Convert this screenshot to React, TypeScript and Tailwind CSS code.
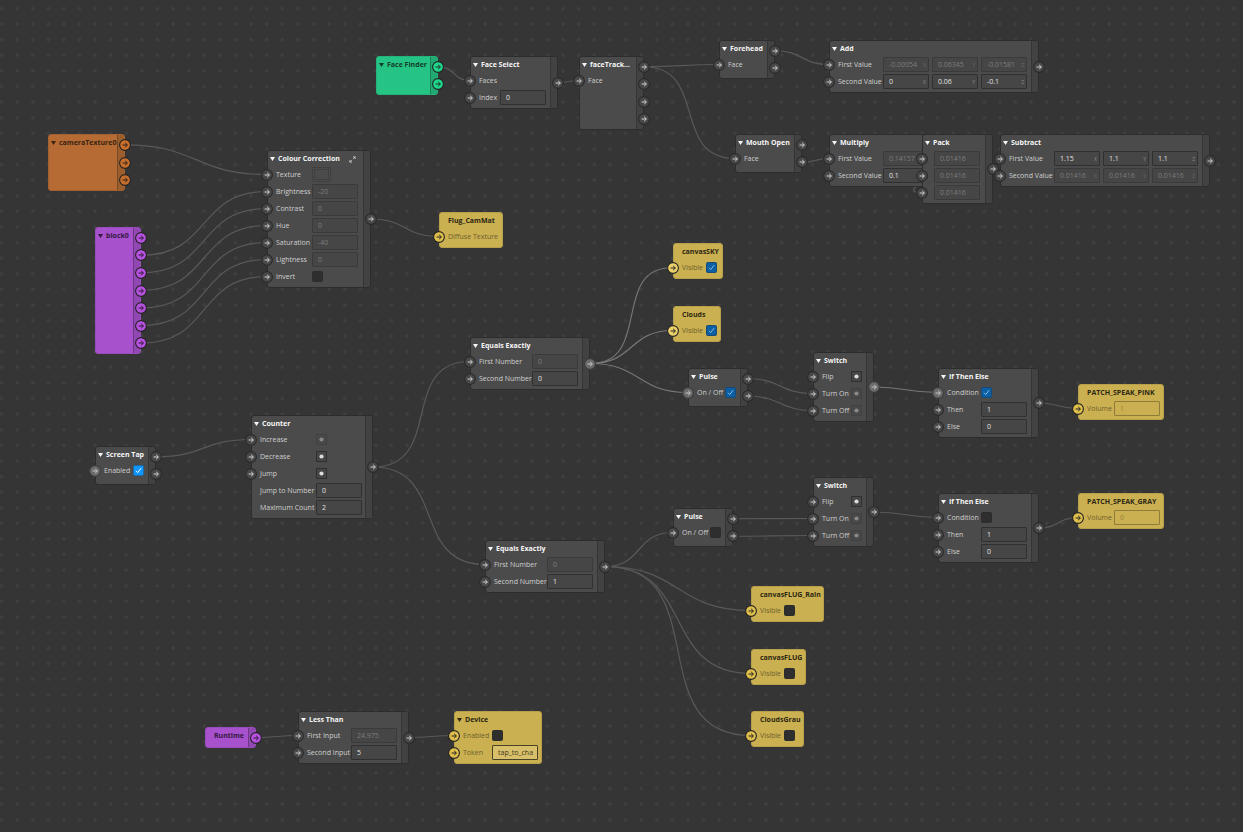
import { useId } from 'react';

type Tone = 'gray' | 'green' | 'orange' | 'purple' | 'yellow';

type Control =
  | { kind: 'none' }
  | { kind: 'text'; value: string; linked?: boolean }
  | { kind: 'vector'; values: string[]; linked?: boolean }
  | { kind: 'check'; on: boolean; bright?: boolean }
  | { kind: 'pulse'; linked?: boolean }
  | { kind: 'swatch' };

interface Row {
  label: string;
  control: Control;
  noPort?: boolean;
  active?: boolean;
}

interface PatchNode {
  id: string;
  title: string;
  tone?: Tone;
  x: number;
  y: number;
  w: number;
  h?: number;
  labelW?: number;
  flat?: boolean;
  expand?: boolean;
  rows?: Row[];
  outs?: number;
  activeOut?: boolean;
}

const HEADER = 16;
const ROW = 17;

const none: Control = { kind: 'none' };
const text = (value: string, linked = false): Control => ({ kind: 'text', value, linked });
const vector = (values: string[], linked = false): Control => ({ kind: 'vector', values, linked });
const check = (on: boolean, bright = false): Control => ({ kind: 'check', on, bright });
const pulse = (linked = false): Control => ({ kind: 'pulse', linked });

const NODES: PatchNode[] = [
  { id: 'finder', title: 'Face Finder', tone: 'green', x: 376, y: 56, w: 62, h: 39, outs: 2 },
  {
    id: 'select', title: 'Face Select', x: 470, y: 56, w: 88, labelW: 21, outs: 1,
    rows: [{ label: 'Faces', control: none }, { label: 'Index', control: text('0') }],
  },
  { id: 'tracker', title: 'faceTrack...', x: 579, y: 56, w: 65, h: 74, outs: 4, rows: [{ label: 'Face', control: none }] },
  { id: 'forehead', title: 'Forehead', x: 719, y: 40, w: 56, h: 39, outs: 2, rows: [{ label: 'Face', control: none }] },
  {
    id: 'add', title: 'Add', x: 829, y: 40, w: 210, labelW: 45, outs: 1,
    rows: [
      { label: 'First Value', control: vector(['-0.00054', '0.06345', '-0.01581'], true) },
      { label: 'Second Value', control: vector(['0', '0.06', '-0.1']) },
    ],
  },
  { id: 'mouth', title: 'Mouth Open', x: 735, y: 134, w: 67, h: 39, outs: 2, rows: [{ label: 'Face', control: none }] },
  {
    id: 'multiply', title: 'Multiply', x: 829, y: 134, w: 113, labelW: 45, outs: 1,
    rows: [
      { label: 'First Value', control: text('0.14157', true) },
      { label: 'Second Value', control: text('0.1') },
    ],
  },
  {
    id: 'pack', title: 'Pack', x: 922, y: 134, w: 71, labelW: 3, outs: 1,
    rows: [
      { label: '', control: text('0.01416', true) },
      { label: '', control: text('0.01416', true) },
      { label: '', control: text('0.01416', true) },
    ],
  },
  {
    id: 'subtract', title: 'Subtract', x: 1000, y: 134, w: 210, labelW: 45, outs: 1,
    rows: [
      { label: 'First Value', control: vector(['1.15', '1.1', '1.1']) },
      { label: 'Second Value', control: vector(['0.01416', '0.01416', '0.01416'], true) },
    ],
  },
  { id: 'camera', title: 'cameraTexture0', tone: 'orange', x: 48, y: 134, w: 77, h: 57, outs: 3 },
  { id: 'block', title: 'block0', tone: 'purple', x: 95, y: 227, w: 46, h: 127, outs: 7 },
  {
    id: 'colour', title: 'Colour Correction', x: 267, y: 150, w: 104, labelW: 36, outs: 1, expand: true,
    rows: [
      { label: 'Texture', control: { kind: 'swatch' } },
      { label: 'Brightness', control: text('-20', true) },
      { label: 'Contrast', control: text('0', true) },
      { label: 'Hue', control: text('0', true) },
      { label: 'Saturation', control: text('-40', true) },
      { label: 'Lightness', control: text('0', true) },
      { label: 'Invert', control: check(false) },
    ],
  },
  { id: 'cammat', title: 'Flug_CamMat', tone: 'yellow', flat: true, x: 439, y: 212, w: 64, rows: [{ label: 'Diffuse Texture', control: none }] },
  { id: 'sky', title: 'canvasSKY', tone: 'yellow', flat: true, x: 673, y: 243, w: 50, labelW: 24, rows: [{ label: 'Visible', control: check(true), active: true }] },
  { id: 'clouds', title: 'Clouds', tone: 'yellow', flat: true, x: 673, y: 306, w: 48, labelW: 24, rows: [{ label: 'Visible', control: check(true), active: true }] },
  {
    id: 'equals1', title: 'Equals Exactly', x: 470, y: 337, w: 120, labelW: 53, outs: 1, activeOut: true,
    rows: [{ label: 'First Number', control: text('0', true) }, { label: 'Second Number', control: text('0') }],
  },
  { id: 'pulse1', title: 'Pulse', x: 688, y: 368, w: 60, h: 39, labelW: 28, outs: 2, rows: [{ label: 'On / Off', control: check(true), active: true }] },
  {
    id: 'switch1', title: 'Switch', x: 813, y: 352, w: 61, labelW: 29, outs: 1, activeOut: true,
    rows: [{ label: 'Flip', control: pulse() }, { label: 'Turn On', control: pulse(true) }, { label: 'Turn Off', control: pulse(true) }],
  },
  {
    id: 'if1', title: 'If Then Else', x: 938, y: 368, w: 101, labelW: 34, outs: 1,
    rows: [{ label: 'Condition', control: check(true), active: true }, { label: 'Then', control: text('1') }, { label: 'Else', control: text('0') }],
  },
  { id: 'pink', title: 'PATCH_SPEAK_PINK', tone: 'yellow', flat: true, x: 1078, y: 384, w: 86, labelW: 27, rows: [{ label: 'Volume', control: text('1', true) }] },
  { id: 'tap', title: 'Screen Tap', x: 95, y: 446, w: 61, h: 39, labelW: 29, outs: 2, rows: [{ label: 'Enabled', control: check(true, true), active: true }] },
  {
    id: 'counter', title: 'Counter', x: 251, y: 415, w: 122, labelW: 56, outs: 1,
    rows: [
      { label: 'Increase', control: pulse(true) },
      { label: 'Decrease', control: pulse() },
      { label: 'Jump', control: pulse() },
      { label: 'Jump to Number', control: text('0'), noPort: true },
      { label: 'Maximum Count', control: text('2'), noPort: true },
    ],
  },
  {
    id: 'equals2', title: 'Equals Exactly', x: 485, y: 540, w: 120, labelW: 53, outs: 1,
    rows: [{ label: 'First Number', control: text('0', true) }, { label: 'Second Number', control: text('1') }],
  },
  { id: 'pulse2', title: 'Pulse', x: 673, y: 508, w: 60, h: 39, labelW: 28, outs: 2, rows: [{ label: 'On / Off', control: check(false) }] },
  {
    id: 'switch2', title: 'Switch', x: 813, y: 477, w: 61, labelW: 29, outs: 1,
    rows: [{ label: 'Flip', control: pulse() }, { label: 'Turn On', control: pulse(true) }, { label: 'Turn Off', control: pulse(true) }],
  },
  {
    id: 'if2', title: 'If Then Else', x: 938, y: 493, w: 101, labelW: 34, outs: 1,
    rows: [{ label: 'Condition', control: check(false) }, { label: 'Then', control: text('1') }, { label: 'Else', control: text('0') }],
  },
  { id: 'gray', title: 'PATCH_SPEAK_GRAY', tone: 'yellow', flat: true, x: 1078, y: 493, w: 86, labelW: 27, rows: [{ label: 'Volume', control: text('0', true) }] },
  { id: 'rain', title: 'canvasFLUG_Rain', tone: 'yellow', flat: true, x: 751, y: 586, w: 73, labelW: 24, rows: [{ label: 'Visible', control: check(false) }] },
  { id: 'flug', title: 'canvasFLUG', tone: 'yellow', flat: true, x: 751, y: 649, w: 55, labelW: 24, rows: [{ label: 'Visible', control: check(false) }] },
  { id: 'grau', title: 'CloudsGrau', tone: 'yellow', flat: true, x: 751, y: 711, w: 53, labelW: 24, rows: [{ label: 'Visible', control: check(false) }] },
  { id: 'runtime', title: 'Runtime', tone: 'purple', flat: true, x: 205, y: 727, w: 51, h: 21, outs: 1 },
  {
    id: 'less', title: 'Less Than', x: 298, y: 711, w: 111, labelW: 44, outs: 1,
    rows: [{ label: 'First Input', control: text('24.975', true) }, { label: 'Second Input', control: text('5') }],
  },
  {
    id: 'device', title: 'Device', tone: 'yellow', x: 454, y: 711, w: 88, labelW: 29,
    rows: [{ label: 'Enabled', control: check(false) }, { label: 'Token', control: text('tap_to_cha') }],
  },
];

// [from, output, to, row, active]
const WIRES: [string, number, string, number, boolean?][] = [
  ['finder', 0, 'select', 0],
  ['select', 0, 'tracker', 0],
  ['tracker', 0, 'forehead', 0],
  ['tracker', 0, 'mouth', 0],
  ['forehead', 0, 'add', 0],
  ['mouth', 1, 'multiply', 0],
  ['multiply', 0, 'pack', 2],
  ['pack', 0, 'subtract', 1],
  ['camera', 0, 'colour', 0],
  ['block', 1, 'colour', 1],
  ['block', 2, 'colour', 2],
  ['block', 3, 'colour', 3],
  ['block', 4, 'colour', 4],
  ['block', 5, 'colour', 5],
  ['block', 6, 'colour', 6],
  ['colour', 0, 'cammat', 0],
  ['equals1', 0, 'sky', 0, true],
  ['equals1', 0, 'clouds', 0, true],
  ['equals1', 0, 'pulse1', 0, true],
  ['pulse1', 0, 'switch1', 1],
  ['pulse1', 1, 'switch1', 2],
  ['switch1', 0, 'if1', 0, true],
  ['if1', 0, 'pink', 0],
  ['tap', 0, 'counter', 0],
  ['counter', 0, 'equals1', 0],
  ['counter', 0, 'equals2', 0],
  ['equals2', 0, 'pulse2', 0],
  ['equals2', 0, 'rain', 0],
  ['equals2', 0, 'flug', 0],
  ['equals2', 0, 'grau', 0],
  ['pulse2', 0, 'switch2', 1],
  ['pulse2', 1, 'switch2', 2],
  ['switch2', 0, 'if2', 0],
  ['if2', 0, 'gray', 0],
  ['runtime', 0, 'less', 0],
  ['less', 0, 'device', 0],
];

const byId = Object.fromEntries(NODES.map((n) => [n.id, n]));

function nodeHeight(n: PatchNode) {
  return n.h ?? HEADER + ROW * (n.rows?.length ?? 0) + 3;
}

function wirePath(from: PatchNode, out: number, to: PatchNode, row: number) {
  const x1 = from.x + from.w;
  const y1 = from.y + 2 + ((nodeHeight(from) - 4) / (from.outs ?? 1)) * (out + 0.5);
  const x2 = to.x;
  const y2 = to.y + HEADER + ROW * (row + 0.5);
  // wires that run backwards need a wider loop
  const bend = Math.hypot(x2 - x1, y2 - y1) * (x2 < x1 ? 0.95 : 0.5);
  return `M${x1} ${y1}C${x1 + bend} ${y1} ${x2 - bend} ${y2} ${x2} ${y2}`;
}

const BODY: Record<Tone, string> = {
  gray: 'bg-[#4b4b4b] border-[#2d2d2d]',
  green: 'bg-[#26c484] border-[#23b279]',
  orange: 'bg-[#b56b33] border-[#a3612f]',
  purple: 'bg-[#a751cd] border-[#984bba]',
  yellow: 'bg-[#cbb051] border-[#b8a04b]',
};

const STRIP: Record<Tone, string> = {
  gray: 'bg-[#424242] border-[#353535]',
  green: 'bg-[#22a872] border-[#1d7f58]',
  orange: 'bg-[#9d5e2e] border-[#774824]',
  purple: 'bg-[#9148b2] border-[#6c3884]',
  yellow: 'bg-[#b39b48] border-[#8a7838]',
};

const TITLE: Record<Tone, string> = {
  gray: 'text-[#f6f6f6]',
  green: 'text-[#143c2b]',
  orange: 'text-[#3a2412]',
  purple: 'text-[#331a40]',
  yellow: 'text-[#2c2713]',
};

const PORT: Record<Tone, string> = {
  gray: 'fill-[#484848] stroke-[#2a2a2a] text-[#d4d4d4]',
  green: 'fill-[#1fd68c] stroke-[#222222] text-[#1c2a24]',
  orange: 'fill-[#c96f2e] stroke-[#222222] text-[#2b2018]',
  purple: 'fill-[#b651e0] stroke-[#222222] text-[#2a1a32]',
  yellow: 'fill-[#dfbf4c] stroke-[#222222] text-[#222222]',
};

function Port({ tone, active }: { tone: Tone; active?: boolean }) {
  let look = PORT[tone];
  if (active && tone === 'gray') look = 'fill-[#6c6c6c] stroke-[#3c3c3c] text-[#c8c8c8]';
  if (active && tone === 'yellow') look = 'fill-[#ecd06a] stroke-[#222222] text-[#222222]';
  return (
    <svg viewBox="0 0 12 12" className={`size-3 shrink-0 ${look}`} aria-hidden="true">
      <circle cx="6" cy="6" r="5.4" strokeWidth="1.1" />
      <path d="M3.6 6h4.6M6.2 3.9 8.4 6 6.2 8.1" fill="none" stroke="currentColor" strokeWidth="1" />
    </svg>
  );
}

function Field({ id, value, axis, linked, yellow }: { id?: string; value: string; axis?: string; linked?: boolean; yellow?: boolean }) {
  let box = 'border-[#303030] bg-[#464646] text-[#e2e2e2]';
  if (linked) box = 'border-[#3a3a3a] bg-[#464646] text-[#7d7d7d]';
  if (yellow) box = 'border-[#4a4227] bg-[#d8c06a] text-[#3d3620]';
  if (yellow && linked) box = 'border-[#8f7c3a] bg-[#cbb051] text-[#94813e]';
  return (
    <span className={`flex h-[15px] w-[46px] items-center rounded-[1px] border pr-0.5 pl-[5px] ${box}`}>
      <input id={id} type="text" defaultValue={value} readOnly={linked} className="min-w-0 flex-1 bg-transparent p-0 leading-3 outline-none" />
      {axis && <span className={`-ml-1 text-[5px] leading-3 ${linked ? 'text-[#666666]' : 'text-[#8c8c8c]'}`}>{axis}</span>}
    </span>
  );
}

function Checkbox({ id, on, bright }: { id: string; on: boolean; bright?: boolean }) {
  return (
    <span className="relative flex size-[11px]">
      <input
        id={id}
        type="checkbox"
        defaultChecked={on}
        className={`peer size-[11px] appearance-none rounded-[2px] border border-[#2a2a2a]/40 bg-[#2e2e2e] ${bright ? 'checked:bg-[#0f97ff]' : 'checked:bg-[#0b60a5]'}`}
      />
      <svg viewBox="0 0 11 11" className={`pointer-events-none absolute inset-0 hidden peer-checked:block ${bright ? 'text-white' : 'text-[#8dbadd]'}`}>
        <path d="M3 5.8 4.7 7.6 8.1 3.2" fill="none" stroke="currentColor" strokeWidth="1" />
      </svg>
    </span>
  );
}

function RowControl({ id, row, tone }: { id: string; row: Row; tone: Tone }) {
  const c = row.control;
  switch (c.kind) {
    case 'text':
      return <Field id={id} value={c.value} linked={c.linked} yellow={tone === 'yellow'} />;
    case 'vector':
      return (
        <span className="flex gap-[3px]">
          {c.values.map((v, i) => (
            <Field key={i} id={i === 0 ? id : undefined} value={v} axis={'XYZ'[i]} linked={c.linked} />
          ))}
        </span>
      );
    case 'check':
      return <Checkbox id={id} on={c.on} bright={c.bright} />;
    case 'pulse':
      return (
        <button
          id={id}
          type="button"
          className={`flex size-[11px] items-center justify-center border ${c.linked ? 'border-[#414141] bg-[#484848] text-[#888888]' : 'border-[#303030] bg-[#464646] text-[#dcdcdc]'}`}
        >
          <svg viewBox="0 0 5 5" className="size-[5px]"><circle cx="2.5" cy="2.5" r="2.1" fill="currentColor" /></svg>
        </button>
      );
    case 'swatch':
      return (
        <button id={id} type="button" className="flex h-[15px] w-[19px] rounded-[1px] border border-[#404040] p-px">
          <span className="flex-1 border border-[#404040]" />
        </button>
      );
    default:
      return null;
  }
}

function NodeCard({ node }: { node: PatchNode }) {
  const uid = useId();
  const tone = node.tone ?? 'gray';
  const labelTone = tone === 'yellow' ? 'text-[#6c5e2e]' : 'text-[#d0d0d0]';
  return (
    <section
      className={`absolute flex rounded-[3px] border ${BODY[tone]}`}
      style={{ left: node.x, top: node.y, width: node.w, height: nodeHeight(node) }}
    >
      <div className="-mt-px min-w-0 flex-1">
        {/* Header */}
        <header className={`flex h-4 items-center pt-0.5 font-bold ${TITLE[tone]}`}>
          {node.flat ? (
            <h2 className="pl-2 whitespace-nowrap">{node.title}</h2>
          ) : (
            <button type="button" className="flex items-center gap-[3px] pl-0.5 whitespace-nowrap">
              <svg viewBox="0 0 5 4" className="h-1 w-[5px]"><path d="M0 0h5L2.5 4z" fill="currentColor" /></svg>
              {node.title}
            </button>
          )}
          {node.expand && (
            <button type="button" aria-label="Expand" className="mr-[7px] ml-auto text-[#cfcfcf]">
              <svg viewBox="0 0 7 7" className="size-[7px]" fill="none" stroke="currentColor" strokeWidth="0.8">
                <path d="M4 .8h2.2V3M6.1.9 4 3M3 6.2H.8V4M.9 6.1 3 4" />
              </svg>
            </button>
          )}
        </header>

        {/* Inputs */}
        {node.rows?.map((row, i) => (
          <div key={i} className="-ml-[7px] flex h-[17px] items-center">
            {row.noPort ? <span className="size-3 shrink-0" /> : <Port tone={tone} active={row.active} />}
            <label htmlFor={`${uid}-${i}`} className={`ml-[3px] shrink-0 whitespace-nowrap ${labelTone}`} style={{ width: node.labelW }}>
              {row.label}
            </label>
            <RowControl id={`${uid}-${i}`} row={row} tone={tone} />
          </div>
        ))}
      </div>

      {/* Outputs */}
      {node.outs && (
        <div className={`flex w-[7px] shrink-0 flex-col rounded-r-[2px] border-l py-px ${STRIP[tone]}`}>
          {Array.from({ length: node.outs }, (_, i) => (
            <span key={i} className="flex flex-1 items-center pl-px">
              <Port tone={tone} active={node.activeOut} />
            </span>
          ))}
        </div>
      )}
    </section>
  );
}

export default function App() {
  return (
    <main className="relative min-h-screen w-full overflow-hidden bg-[#353535] font-['Open_Sans','Noto_Sans',sans-serif] text-[7px] leading-[10px]">
      {/* Grid and wires */}
      <svg className="absolute inset-0 size-full" aria-hidden="true">
        <defs>
          <pattern id="grid" x="-6.3" y="0.7" width="15.6" height="15.6" patternUnits="userSpaceOnUse">
            <path d="M7.8 5.8v4M5.8 7.8h4" stroke="#434343" strokeWidth="1" />
          </pattern>
        </defs>
        <rect width="100%" height="100%" fill="url(#grid)" />
        {WIRES.map(([from, out, to, row, active], i) => (
          <path
            key={i}
            d={wirePath(byId[from], out, byId[to], row)}
            fill="none"
            stroke={active ? '#777777' : '#595959'}
            strokeWidth="1.2"
          />
        ))}
      </svg>

      {NODES.map((n) => (
        <NodeCard key={n.id} node={n} />
      ))}
    </main>
  );
}
